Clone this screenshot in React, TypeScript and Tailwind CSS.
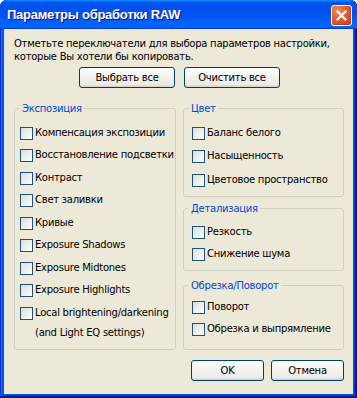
import React from "react";

const Checkbox = () => (
  <span className="block w-[13px] h-[13px] shrink-0 border border-[#1C5180] bg-[image:linear-gradient(135deg,#DCDCD7_0%,#FFFFFF_100%)]" />
);

const Row = ({ label, h, extra }: { label: string; h: string; extra?: string }) => (
  <div className={`flex items-start ${h}`}>
    <Checkbox />
    <div className="ml-[2px] -mt-[1px]">
      <div className="leading-[13px] whitespace-nowrap">{label}</div>
      {extra && <div className="leading-[13px] mt-[7px] whitespace-nowrap">{extra}</div>}
    </div>
  </div>
);

const XPButton = ({ children, w }: { children: React.ReactNode; w: string }) => (
  <button
    className={`${w} h-[21px] rounded-[3px] border border-[#003C74] bg-[image:linear-gradient(180deg,#FFFFFF_0%,#F3F2EE_50%,#ECEBE6_86%,#D6D0C5_100%)] text-black leading-[13px] flex items-center justify-center`}
  >
    {children}
  </button>
);

const Legend = ({ children }: { children: React.ReactNode }) => (
  <legend className="ml-[5px] px-[2px] text-[#0046D5] leading-[13px]">{children}</legend>
);

export default function App() {
  const leftItems = [
    "Компенсация экспозиции",
    "Восстановление подсветки",
    "Контраст",
    "Свет заливки",
    "Кривые",
    "Exposure Shadows",
    "Exposure Midtones",
    "Exposure Highlights",
  ];
  return (
    <div className="w-[357px] h-[398px] bg-white font-['DejaVu_Sans',sans-serif] text-[10px] tracking-[-0.25px] text-black">
      <div className="w-full h-full flex flex-col rounded-t-[7px] overflow-hidden bg-[#0855DD] shadow-[inset_-1px_-1px_#00138c,inset_1px_1px_#0831d9,inset_-2px_-2px_#001ea0,inset_2px_2px_#166aee,inset_-3px_-3px_#003bda,inset_3px_3px_#0855dd]">
        {/* Title bar */}
        <div className="h-[29px] shrink-0 flex items-center justify-between pl-[7px] pr-[5px] bg-[image:linear-gradient(180deg,#0997ff_0%,#0053ee_8%,#0050ee_40%,#0066ff_88%,#0066ff_93%,#005bff_95%,#003dd7_96%,#003dd7_100%)] rounded-t-[7px]">
          <span className="font-['Liberation_Sans',sans-serif] font-bold text-[13px] tracking-[-0.25px] text-white [text-shadow:1px_1px_#0f1089] leading-[16px] pt-[1px]">
            Параметры обработки RAW
          </span>
          <div className="w-[21px] h-[21px] rounded-[3px] border border-white bg-[image:radial-gradient(circle_at_30%_25%,#F08A66_0%,#E2603A_40%,#D2481F_80%,#C23E16_100%)] shadow-[inset_-1px_-1px_#B8401C] flex items-center justify-center mt-[2px]">
            <svg width="13" height="13" viewBox="0 0 13 13">
              <path d="M2.5 2.5 L10.5 10.5 M10.5 2.5 L2.5 10.5" stroke="white" strokeWidth="2.2" strokeLinecap="square" />
            </svg>
          </div>
        </div>
        {/* Body */}
        <div className="flex-1 mx-[4px] mb-[4px] bg-[#ECE9D8] pl-[10px] pt-[8px] flex flex-col">
          <p className="leading-[13px]">
            Отметьте переключатели для выбора параметров настройки,
            <br />
            которые Вы хотели бы копировать.
          </p>
          <div className="flex gap-[9px] mt-[4px] ml-[65px]">
            <XPButton w="w-[96px]">Выбрать все</XPButton>
            <XPButton w="w-[96px]">Очистить все</XPButton>
          </div>
          <div className="flex gap-[7px] mt-[14px]">
            <fieldset className="w-[162px] h-[248px] border border-[#D0D0BF] rounded-[3px]">
              <Legend>Экспозиция</Legend>
              <div className="pl-[5px] pt-[12px]">
                {leftItems.map((l, i) => (
                  <Row key={l} label={l} h={i % 2 === 0 ? "h-[22px]" : "h-[23px]"} />
                ))}
                <Row label="Local brightening/darkening" extra="(and Light EQ settings)" h="h-[33px]" />
              </div>
            </fieldset>
            <div className="w-[161px] flex flex-col">
              <fieldset className="h-[95px] border border-[#D0D0BF] rounded-[3px]">
                <Legend>Цвет</Legend>
                <div className="pl-[8px] pt-[12px]">
                  <Row label="Баланс белого" h="h-[23px]" />
                  <Row label="Насыщенность" h="h-[24px]" />
                  <Row label="Цветовое пространство" h="h-[14px]" />
                </div>
              </fieldset>
              <fieldset className="h-[69px] mt-[5px] border border-[#D0D0BF] rounded-[3px]">
                <Legend>Детализация</Legend>
                <div className="pl-[8px] pt-[11px]">
                  <Row label="Резкость" h="h-[22px]" />
                  <Row label="Снижение шума" h="h-[14px]" />
                </div>
              </fieldset>
              <fieldset className="h-[71px] mt-[8px] border border-[#D0D0BF] rounded-[3px]">
                <Legend>Обрезка/Поворот</Legend>
                <div className="pl-[8px] pt-[9px]">
                  <Row label="Поворот" h="h-[22px]" />
                  <Row label="Обрезка и выпрямление" h="h-[14px]" />
                </div>
              </fieldset>
            </div>
          </div>
          <div className="flex justify-end gap-[7px] mt-[10px] pr-[9px]">
            <XPButton w="w-[73px]">OK</XPButton>
            <XPButton w="w-[73px]">Отмена</XPButton>
          </div>
        </div>
      </div>
    </div>
  );
}
